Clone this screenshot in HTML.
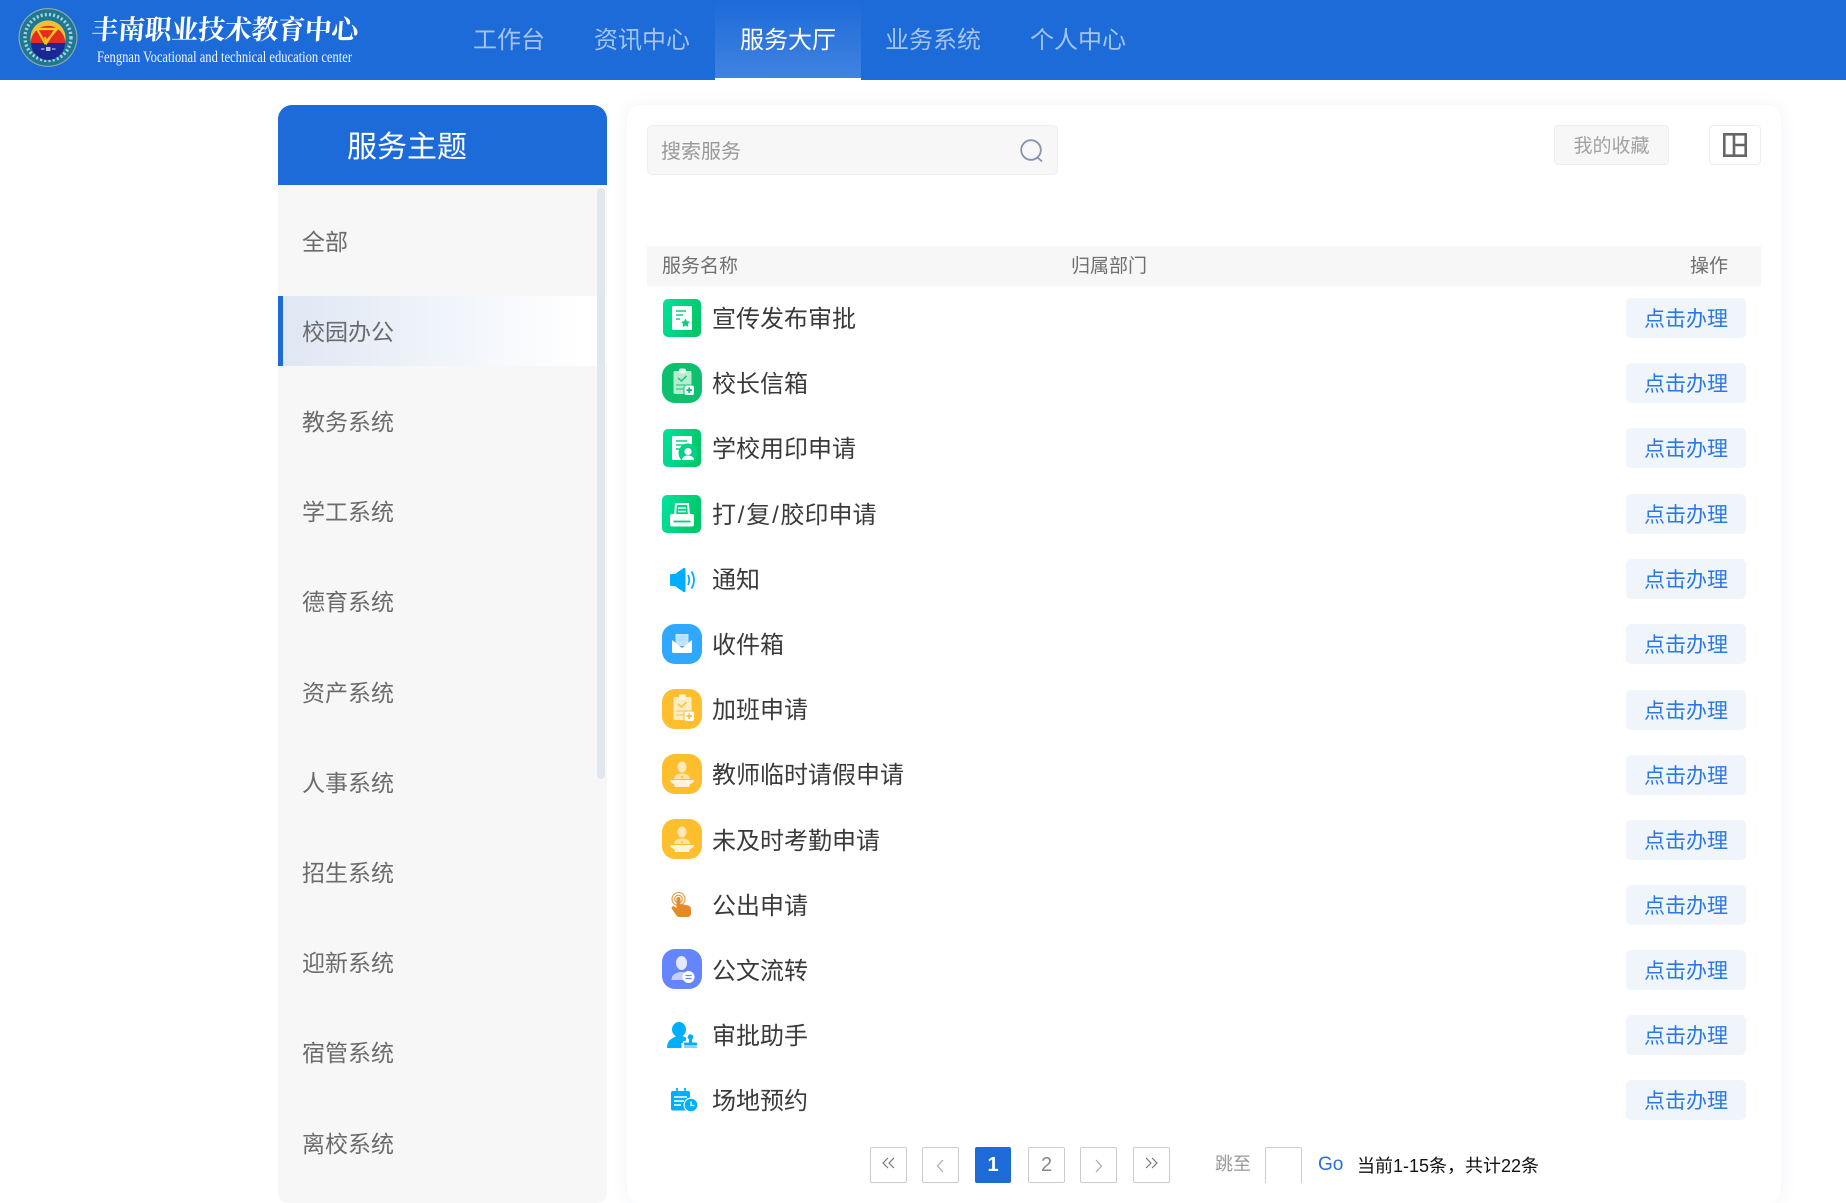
<!DOCTYPE html>
<html lang="zh-CN">
<head>
<meta charset="utf-8">
<title>服务大厅</title>
<style>
*{box-sizing:border-box;margin:0;padding:0}
html,body{width:1846px;height:1203px;overflow:hidden;background:#fff}
body{position:relative;font-family:"Liberation Sans","Noto Sans CJK SC",sans-serif;color:#333}
.a{position:absolute}
.hd{left:0;top:0;width:1846px;height:80px;background:#1c6bd9}
.nav{top:0;height:80px;line-height:81px;font-size:24px;color:#a4c4f0;text-align:center}
.nav.on{color:#fff;background:linear-gradient(180deg,#1c6bd9 0%,#4182e0 100%);border-bottom:2px solid #fff}
.sb{left:278px;top:105px;width:329px;height:1098px;background:#f7f7f7;border-radius:14px 14px 10px 10px;overflow:hidden}
.sbh{left:0;top:0;width:329px;height:80px;background:#1c6bd9;color:#fff;font-size:30px;line-height:86px;padding-left:69px}
.it{left:0;width:329px;height:70px;line-height:72px;padding-left:24px;font-size:23px;color:#6b6b6b}
.it.on{background:linear-gradient(90deg,#dfe7f4 0%,#ffffff 92%);border-left:5px solid #1c6bd9;padding-left:19px}
.scr{left:319px;top:83px;width:8px;height:591px;background:#e2e6ee;border-radius:4px}
.pn{left:627px;top:105px;width:1154px;height:1098px;background:#fff;border-radius:14px;box-shadow:0 0 18px rgba(70,100,170,.07)}
.srch{left:647px;top:125px;width:411px;height:50px;background:#f7f7f7;border:1px solid #eee;border-radius:5px;font-size:20px;color:#999;line-height:52px;padding-left:13px}
.fav{left:1554px;top:125px;width:115px;height:40px;background:#f7f7f7;border:1px solid #eee;border-radius:4px;text-align:center;font-size:19px;line-height:41px;color:#a2a2a2}
.lay{left:1709px;top:125px;width:52px;height:40px;border:1px solid #eee;border-radius:4px;background:#fff}
.th{left:647px;top:246px;width:1114px;height:40px;background:#f7f7f7}
.thx{top:246px;height:40px;line-height:41px;font-size:19px;color:#6f6f6f}
.t{left:712px;height:40px;line-height:44px;font-size:24px;color:#3a3a3a;white-space:nowrap}
.b{left:1626px;width:120px;height:40px;line-height:44px;background:#f0f5fc;border-radius:5px;text-align:center;font-size:21px;color:#2a78e4}
.ic{position:absolute;left:0;top:0;overflow:visible}
.pg{top:1147px;width:37px;height:36px;border:1px solid #ccc;border-radius:2px;text-align:center;line-height:34px;font-size:20px;color:#888;background:#fff}
.pg.cur{background:#1c6bd9;border-color:#1c6bd9;color:#fff;font-weight:700}
</style>
</head>
<body>

<div class="a hd"></div>
<svg class="ic" width="400" height="80" viewBox="0 0 400 80">
  <circle cx="48" cy="37.5" r="29.5" fill="#8aa7a8"/>
  <circle cx="48" cy="37.5" r="28.3" fill="#1f7893"/>
  <circle cx="48" cy="37.5" r="23" fill="none" stroke="#a9d3dc" stroke-width="3.4" stroke-dasharray="2 2.2"/>
  <circle cx="48" cy="38" r="17.6" fill="#e9c23a"/>
  <path d="M30.800 43a17 17 0 1 1 34.400 0z" fill="#e62c22"/>
  <path d="M31 43h34a17 17 0 0 1-34 0z" fill="#1a2797"/>
  <path d="M37 29h20l-12 14z" fill="none" stroke="#f6c81e" stroke-width="2.200"/>
  <path d="M45 37l1.500 6 11-17" fill="none" stroke="#f6c81e" stroke-width="2"/>
  <path d="M41 49h3.500M52 49h3.500" stroke="#dfe6ff" stroke-width="1"/>
  <rect x="46" y="47" width="4.500" height="4" fill="#dfe6ff" opacity=".8"/>
  <text x="91" y="39" textLength="267" lengthAdjust="spacing" font-family="'Noto Serif CJK SC',serif" font-weight="700" font-size="27" fill="#fff" transform="skewX(-4) translate(2.500 0)">丰南职业技术教育中心</text>
  <text x="97" y="62" textLength="255" lengthAdjust="spacingAndGlyphs" font-family="'Liberation Serif',serif" font-size="16" fill="#f0f5fd">Fengnan Vocational and technical education center</text>
</svg>

<div class="a nav" style="left:448px;width:122px">工作台</div>
<div class="a nav" style="left:569px;width:146px">资讯中心</div>
<div class="a nav on" style="left:715px;width:146px">服务大厅</div>
<div class="a nav" style="left:860px;width:146px">业务系统</div>
<div class="a nav" style="left:1005px;width:146px">个人中心</div>

<div class="a sb">
  <div class="a sbh">服务主题</div>
  <div class="a it" style="top:101px">全部</div>
  <div class="a it on" style="top:191px">校园办公</div>
  <div class="a it" style="top:281px">教务系统</div>
  <div class="a it" style="top:371px">学工系统</div>
  <div class="a it" style="top:461px">德育系统</div>
  <div class="a it" style="top:552px">资产系统</div>
  <div class="a it" style="top:642px">人事系统</div>
  <div class="a it" style="top:732px">招生系统</div>
  <div class="a it" style="top:822px">迎新系统</div>
  <div class="a it" style="top:912px">宿管系统</div>
  <div class="a it" style="top:1003px">离校系统</div>
  <div class="a scr"></div>
</div>

<div class="a pn"></div>

<div class="a srch">搜索服务</div>
<svg class="ic" width="1846" height="200" viewBox="0 0 1846 200">
  <circle cx="1031" cy="150" r="9.800" fill="none" stroke="#8a92ad" stroke-width="1.800"/>
  <path d="M1038 158l3.500 3" stroke="#8a92ad" stroke-width="1.800" stroke-linecap="round"/>
</svg>
<div class="a fav">我的收藏</div>
<div class="a lay"></div>
<svg class="ic" width="1846" height="200" viewBox="0 0 1846 200">
  <path d="M1724.300 134.300h21.400v21.400h-21.400zM1734 134.300v21.400M1734 145h11.700" fill="none" stroke="#666" stroke-width="2.600"/>
</svg>

<div class="a th"></div>
<div class="a thx" style="left:662px">服务名称</div>
<div class="a thx" style="left:1071px">归属部门</div>
<div class="a thx" style="left:1690px">操作</div>

<div class="a t" style="top:298px">宣传发布审批</div><div class="a b" style="top:298px">点击办理</div>
<div class="a t" style="top:363px">校长信箱</div><div class="a b" style="top:363px">点击办理</div>
<div class="a t" style="top:428px">学校用印申请</div><div class="a b" style="top:428px">点击办理</div>
<div class="a t" style="top:494px">打<span style="margin:0 1.800px">/</span>复<span style="margin:0 1.800px">/</span>胶印申请</div><div class="a b" style="top:494px">点击办理</div>
<div class="a t" style="top:559px">通知</div><div class="a b" style="top:559px">点击办理</div>
<div class="a t" style="top:624px">收件箱</div><div class="a b" style="top:624px">点击办理</div>
<div class="a t" style="top:689px">加班申请</div><div class="a b" style="top:690px">点击办理</div>
<div class="a t" style="top:754px">教师临时请假申请</div><div class="a b" style="top:755px">点击办理</div>
<div class="a t" style="top:820px">未及时考勤申请</div><div class="a b" style="top:820px">点击办理</div>
<div class="a t" style="top:885px">公出申请</div><div class="a b" style="top:885px">点击办理</div>
<div class="a t" style="top:950px">公文流转</div><div class="a b" style="top:950px">点击办理</div>
<div class="a t" style="top:1015px">审批助手</div><div class="a b" style="top:1015px">点击办理</div>
<div class="a t" style="top:1080px">场地预约</div><div class="a b" style="top:1080px">点击办理</div>

<svg class="ic" width="1846" height="1203" viewBox="0 0 1846 1203">
  <defs>
    <linearGradient id="g" x1="0" y1="0" x2="1" y2="0.3"><stop offset="0" stop-color="#00e3a0"/><stop offset="1" stop-color="#00c868"/></linearGradient>
  </defs>

  <!-- 1 doc star -->
  <g transform="translate(663 299)">
    <rect width="38" height="38" rx="5" fill="url(#g)"/>
    <rect x="9" y="7" width="20" height="24" rx="1.500" fill="#fff"/>
    <path d="M13 12h10M13 16h7M13 20h4" stroke="#0ad184" stroke-width="1.500"/>
    <path d="M22.500 19.500l1.400 2.800 3.100.4-2.200 2.200.5 3.100-2.800-1.500-2.800 1.500.5-3.100-2.200-2.200 3.100-.4z" fill="#06cf7e"/>
  </g>

  <!-- 2 clipboard green -->
  <g transform="translate(662 363)">
    <rect width="40" height="40" rx="13" fill="#0cc06e"/>
    <rect x="11.500" y="8" width="18" height="23" rx="1.500" fill="#b6ecd0"/>
    <rect x="17" y="5.500" width="7" height="5" rx="2" fill="#e6f9ef"/>
    <path d="M16 15l3.500 3 5-5" fill="none" stroke="#2cc47f" stroke-width="1.600"/>
    <path d="M14 22h9M14 26h9" stroke="#4ccf93" stroke-width="1.400"/>
    <rect x="22" y="22" width="10.500" height="10.500" rx="2.500" fill="#fff" stroke="#0cc06e" stroke-width="1"/>
    <path d="M27.200 24.500v5.500M24.500 27.200h5.500" stroke="#0cc06e" stroke-width="1.800"/>
  </g>

  <!-- 3 doc person -->
  <g transform="translate(663 429)">
    <rect width="38" height="38" rx="5" fill="url(#g)"/>
    <rect x="9" y="7" width="20" height="24" rx="1.500" fill="#fff"/>
    <path d="M13 12h11M13 16h11M13 20h6" stroke="#0ad184" stroke-width="1.500"/>
    <circle cx="25" cy="24" r="9.500" fill="#05d185"/>
    <circle cx="25" cy="22.500" r="3.600" fill="#fff"/>
    <path d="M19 31c0-3 3-4.500 6-4.500s6 1.500 6 4.500z" fill="#fff"/>
  </g>

  <!-- 4 printer -->
  <g transform="translate(662 495)">
    <rect width="39" height="38" rx="5" fill="url(#g)"/>
    <path d="M14 9h12l1 12H13z" fill="none" stroke="#fff" stroke-width="2"/>
    <path d="M16 13h8M16 16.500h8" stroke="#fff" stroke-width="1.500"/>
    <rect x="8" y="19" width="24" height="12.500" rx="2" fill="#fff"/>
    <path d="M11.500 26.500h17" stroke="#07cd7e" stroke-width="1.800"/>
  </g>

  <!-- 5 speaker -->
  <g fill="#00aeff">
    <path d="M670 575.500q0-1.500 1.500-1.500h3.500l8.500-6q2-.5 2 1.500v21q0 2-2 1.500l-8.500-6h-3.500q-1.500 0-1.500-1.500z"/>
    <path d="M688 575q2.500 5 0 10" fill="none" stroke="#00aeff" stroke-width="1.800"/>
    <path d="M691.500 571.500q5 8.500 0 17" fill="none" stroke="#00aeff" stroke-width="1.800"/>
  </g>

  <!-- 6 inbox -->
  <g transform="translate(662 624)">
    <rect width="40" height="40" rx="13" fill="#2ea9ff"/>
    <path d="M13.500 10h13v12h-13z" fill="#c2e4ff"/>
    <path d="M15.500 13h9M15.500 16h9" stroke="#a5d6ff" stroke-width="1"/>
    <path d="M10 16l10 8 10-8v11.500q0 1.500-1.500 1.500h-17q-1.500 0-1.500-1.500z" fill="#fff"/>
  </g>

  <!-- 7 clipboard yellow -->
  <g transform="translate(662 689)">
    <rect width="40" height="40" rx="13" fill="#ffbe2e"/>
    <rect x="11.500" y="8" width="18" height="23" rx="1.500" fill="#ffedc2"/>
    <rect x="17" y="5.500" width="7" height="5" rx="2" fill="#fff6e0"/>
    <path d="M16 15l3.500 3 5-5" fill="none" stroke="#fcc445" stroke-width="1.600"/>
    <path d="M14 22h9M14 26h9" stroke="#fdd070" stroke-width="1.400"/>
    <rect x="22" y="22" width="10.500" height="10.500" rx="2.500" fill="#fff" stroke="#ffbe2e" stroke-width="1"/>
    <path d="M27.200 24.500v5.500M24.500 27.200h5.500" stroke="#ffbe2e" stroke-width="1.800"/>
  </g>

  <!-- 8 person desk -->
  <g transform="translate(662 754)">
    <rect width="40" height="40" rx="13" fill="#ffbe2e"/>
    <ellipse cx="20" cy="13" rx="4.500" ry="5.500" fill="#ffe9b8"/>
    <path d="M12 25c0-4 4-5.500 8-5.500s8 1.500 8 5.500z" fill="#ffe3a3"/>
    <path d="M8 26h24q0 3-4 4l-1 3H13l-1-3q-4-1-4-4z" fill="#fff3d9"/>
    <circle cx="20" cy="23" r="1" fill="#ffbe2e"/>
  </g>

  <!-- 9 person desk -->
  <g transform="translate(662 819)">
    <rect width="40" height="40" rx="13" fill="#ffbe2e"/>
    <ellipse cx="20" cy="13" rx="4.500" ry="5.500" fill="#ffe9b8"/>
    <path d="M12 25c0-4 4-5.500 8-5.500s8 1.500 8 5.500z" fill="#ffe3a3"/>
    <path d="M8 26h24q0 3-4 4l-1 3H13l-1-3q-4-1-4-4z" fill="#fff3d9"/>
    <circle cx="20" cy="23" r="1" fill="#ffbe2e"/>
  </g>

  <!-- 10 hand -->
  <g>
    <circle cx="678.500" cy="899" r="6.500" fill="none" stroke="#e8963c" stroke-width="1.100"/>
    <circle cx="678.500" cy="899" r="3.800" fill="none" stroke="#e8963c" stroke-width="1.100"/>
    <path d="M676.500 899q0-2 2-2t2 2v5l7 1.200q3.500.6 3.500 4v4.300q0 3.500-3.500 3.500h-8q-2 0-3-1.500l-4.500-6.500q-1-2 .8-2.800 1.200-.5 3.700 1.800z" fill="#e58a2a"/>
  </g>

  <!-- 11 person arrows -->
  <g transform="translate(662 949)">
    <rect width="40" height="40" rx="13" fill="#6585ff"/>
    <ellipse cx="19.500" cy="14" rx="5.500" ry="7" fill="#e3e9ff"/>
    <path d="M9.500 31q0-5 4-6.500l4-1.500h4l3 2-2 6z" fill="#c3d0ff"/>
    <circle cx="26.500" cy="28" r="6" fill="#fff"/>
    <path d="M23.500 26.500h6M23.500 29.500h6" stroke="#6585ff" stroke-width="1.300"/>
  </g>

  <!-- 12 people stamp -->
  <g>
    <ellipse cx="679" cy="1029.500" rx="7" ry="7.500" fill="#00aeff"/>
    <path d="M667 1048q0-7 5-9.500l4.500-2.500q3 1.500 6 0l4 2-1 3h-2.500v2h-1.500v5z" fill="#00aeff"/>
    <circle cx="690.500" cy="1037" r="2.800" fill="#00aeff"/>
    <rect x="689" y="1038" width="3" height="5" fill="#00aeff"/>
    <rect x="684" y="1042.500" width="13" height="3" rx="1" fill="#00aeff"/>
    <rect x="684" y="1046" width="13" height="2" fill="#7fd6ff"/>
  </g>

  <!-- 13 calendar clock -->
  <g>
    <rect x="671" y="1091" width="19" height="19.500" rx="2" fill="#00aeff"/>
    <path d="M677 1088v5M685 1088v5" stroke="#00aeff" stroke-width="1.800"/>
    <path d="M674 1097h13M674 1101h10M674 1105h7" stroke="#fff" stroke-width="1.400"/>
    <circle cx="691" cy="1105" r="7.500" fill="#fff"/>
    <circle cx="691" cy="1105" r="6.300" fill="#00aeff"/>
    <path d="M691 1101.500v4h3.500" fill="none" stroke="#fff" stroke-width="1.300"/>
  </g>
</svg>

<!-- pagination -->
<div class="a pg" style="left:870px"></div>
<div class="a pg" style="left:922px"></div>
<div class="a pg cur" style="left:975px;width:36px">1</div>
<div class="a pg" style="left:1028px">2</div>
<div class="a pg" style="left:1080px"></div>
<div class="a pg" style="left:1133px"></div>
<svg class="ic" width="1846" height="1203" viewBox="0 0 1846 1203">
  <path d="M888 1158l-5 5 5 5M894 1158l-5 5 5 5" fill="none" stroke="#777" stroke-width="1.200"/>
  <path d="M943 1160l-5.500 6 5.500 6" fill="none" stroke="#aaa" stroke-width="1.200"/>
  <path d="M1096 1160l5.500 6-5.500 6" fill="none" stroke="#aaa" stroke-width="1.200"/>
  <path d="M1146 1158l5 5-5 5M1152 1158l5 5-5 5" fill="none" stroke="#777" stroke-width="1.200"/>
</svg>
<div class="a" style="left:1215px;top:1149px;font-size:18px;line-height:30px;color:#999">跳至</div>
<div class="a" style="left:1265px;top:1147px;width:37px;height:36px;border:1px solid #ccc;border-bottom:0;border-radius:2px 2px 0 0"></div>
<div class="a" style="left:1318px;top:1150px;font-size:19px;line-height:30px;color:#2a6fd6">Go</div>
<div class="a" style="left:1357px;top:1151px;font-size:18px;line-height:30px;color:#111;white-space:nowrap">当前1-15条，共计22条</div>

</body>
</html>
